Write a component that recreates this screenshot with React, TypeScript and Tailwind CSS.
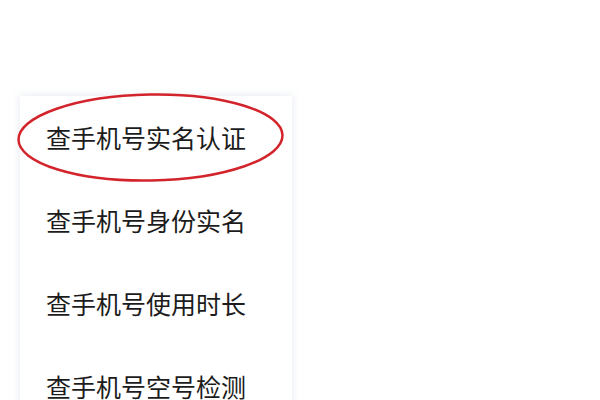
export default function App() {
  const items = ["查手机号实名认证", "查手机号身份实名", "查手机号使用时长", "查手机号空号检测"];
  return (
    <div className="w-[600px] h-[400px] bg-white overflow-hidden relative" style={{ fontFamily: '"Noto Sans CJK SC", "Noto Sans", sans-serif' }}>
      <div className="pt-[96px] pl-[20px]">
        <div className="w-[272px] bg-white shadow-[0_0_8px_rgba(200,210,225,0.5)]">
          {items.map((t) => (
            <div key={t} className="h-[83px] flex items-center pl-[26px] text-[25px] text-[#1c1c1c] leading-none">
              {t}
            </div>
          ))}
        </div>
      </div>
      <svg className="absolute left-0 top-0" width="600" height="400">
        <ellipse cx="150.5" cy="137.5" rx="132" ry="43" fill="none" stroke="#d3242b" strokeWidth="2.5" transform="rotate(-1 150.5 137.5)" />
      </svg>
    </div>
  );
}
